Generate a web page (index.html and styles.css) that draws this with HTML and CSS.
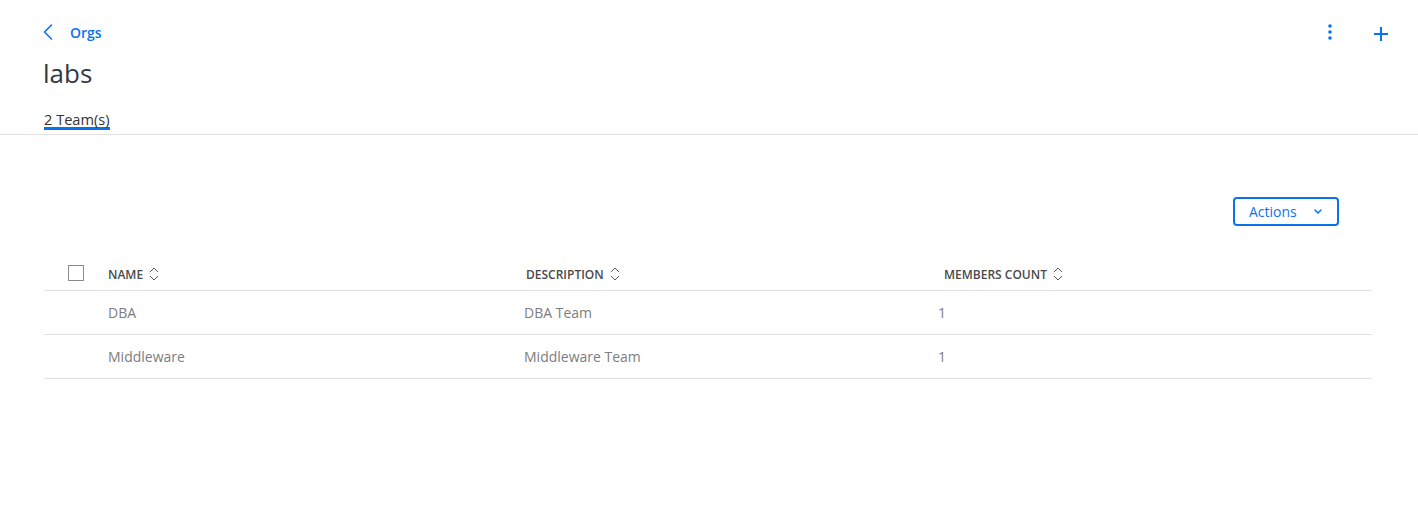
FILE: index.html
```html
<!DOCTYPE html>
<html lang="en">
<head>
<meta charset="utf-8">
<title>labs - Teams</title>
<link rel="stylesheet" href="styles.css">
</head>
<body>
<div class="page">
  <header class="head">
    <div class="topbar">
      <a class="back" href="#">
        <svg class="back-icon" width="10" height="16" viewBox="0 0 10 16"><polyline points="8.5,1 1.5,8 8.5,15" fill="none" stroke="currentColor" stroke-width="1.6" stroke-linecap="round" stroke-linejoin="round"/></svg>
        <span>Orgs</span>
      </a>
      <div class="tools">
        <button class="icon-btn" aria-label="More">
          <svg width="24" height="24" viewBox="0 0 24 24"><circle cx="12" cy="6" r="1.8" fill="currentColor"/><circle cx="12" cy="12" r="1.8" fill="currentColor"/><circle cx="12" cy="18" r="1.8" fill="currentColor"/></svg>
        </button>
        <button class="icon-btn" aria-label="Add">
          <svg width="24" height="24" viewBox="0 0 24 24"><path d="M12 7V21M5 14H19" fill="none" stroke="currentColor" stroke-width="2"/></svg>
        </button>
      </div>
    </div>
    <h1 class="title">labs</h1>
  </header>

  <nav class="tabs">
    <span class="tab active">2 Team(s)</span>
  </nav>

  <main class="content">
    <div class="toolbar">
      <button class="actions">
        <span>Actions</span>
        <svg width="8" height="5" viewBox="0 0 8 5"><polyline points="1,1 4,4 7,1" fill="none" stroke="currentColor" stroke-width="1.5" stroke-linecap="round" stroke-linejoin="round"/></svg>
      </button>
    </div>

    <div class="table">
      <div class="row header-row">
        <div class="cell check-cell"><span class="checkbox"></span></div>
        <div class="cell th th-name">NAME <svg class="sort" width="10" height="16" viewBox="0 0 10 16"><polyline points="1,6 5,2 9,6" fill="none" stroke="currentColor" stroke-width="1"/><polyline points="1,10 5,14 9,10" fill="none" stroke="currentColor" stroke-width="1"/></svg></div>
        <div class="cell th th-desc">DESCRIPTION <svg class="sort" width="10" height="16" viewBox="0 0 10 16"><polyline points="1,6 5,2 9,6" fill="none" stroke="currentColor" stroke-width="1"/><polyline points="1,10 5,14 9,10" fill="none" stroke="currentColor" stroke-width="1"/></svg></div>
        <div class="cell th th-count">MEMBERS COUNT <svg class="sort" width="10" height="16" viewBox="0 0 10 16"><polyline points="1,6 5,2 9,6" fill="none" stroke="currentColor" stroke-width="1"/><polyline points="1,10 5,14 9,10" fill="none" stroke="currentColor" stroke-width="1"/></svg></div>
      </div>
      <div class="row">
        <div class="cell check-cell"></div>
        <div class="cell">DBA</div>
        <div class="cell">DBA Team</div>
        <div class="cell">1</div>
      </div>
      <div class="row">
        <div class="cell check-cell"></div>
        <div class="cell">Middleware</div>
        <div class="cell">Middleware Team</div>
        <div class="cell">1</div>
      </div>
    </div>
  </main>
</div>
</body>
</html>
```

FILE: styles.css
```css
* { box-sizing: border-box; }

html, body {
  margin: 0;
  padding: 0;
  background: #ffffff;
}

body {
  font-family: "Open Sans", "Noto Sans", sans-serif;
  color: #333333;
}

.head {
  padding: 16px 25px 0 43px;
}

.topbar {
  height: 32px;
  display: flex;
  align-items: center;
  justify-content: space-between;
}

.back {
  display: flex;
  align-items: center;
  gap: 17px;
  color: #0a72ef;
  text-decoration: none;
  font-size: 14px;
  font-weight: 600;
}

.back-icon { display: block; }

.tools {
  display: flex;
  align-items: center;
  gap: 27px;
}

.icon-btn {
  width: 24px;
  height: 24px;
  padding: 0;
  border: 0;
  background: none;
  color: #0a72ef;
  display: flex;
  align-items: center;
  justify-content: center;
}

.icon-btn svg { display: block; }

.title {
  margin: 7px 0 0;
  font-size: 26px;
  line-height: 36px;
  font-weight: 400;
  color: #2f3a44;
}

.tabs {
  display: flex;
  padding: 20px 0 4px 44px;
  border-bottom: 1px solid #e2e2e2;
}

.tab {
  display: block;
  font-size: 14.6px;
  line-height: 16px;
  color: #333333;
  border-bottom: 3px solid transparent;
}

.tab.active { border-bottom-color: #0a72ef; }

.content {
  padding: 62px 46px 0 44px;
}

.toolbar {
  display: flex;
  justify-content: flex-end;
  padding-right: 33px;
}

.actions {
  height: 29px;
  width: 106px;
  padding: 0 15px 0 14px;
  border: 2px solid #0a72ef;
  border-radius: 4px;
  background: #ffffff;
  color: #0a72ef;
  font-family: inherit;
  font-size: 14px;
  display: flex;
  align-items: center;
  justify-content: space-between;
}

.actions svg { display: block; }

.table {
  margin-top: 32px;
}

.row {
  display: grid;
  grid-template-columns: 64px 416px 414px 1fr;
  height: 44px;
  border-bottom: 1px solid #e2e2e2;
  align-items: center;
  font-size: 14px;
  color: #7d7d7d;
}

.header-row {
  height: 33px;
}

.cell {
  display: flex;
  align-items: center;
}

.check-cell { padding-left: 24px; }

.checkbox {
  width: 16px;
  height: 16px;
  border: 1px solid #8c8c8c;
  margin-bottom: 3px;
  background: #ffffff;
}

.th {
  font-size: 12px;
  font-weight: 600;
  color: #4a4a4a;
  gap: 6px;
}

.th-desc { padding-left: 2px; }
.th-count { padding-left: 6px; }

.sort {
  display: block;
  color: #5a5a5a;
}
```
